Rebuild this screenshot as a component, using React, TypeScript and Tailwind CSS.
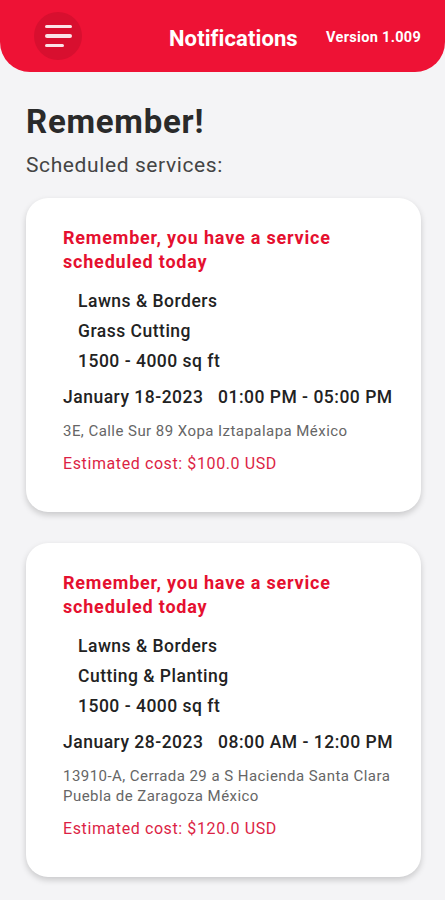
import React from "react";

type Service = {
  items: string[];
  date: string;
  time: string;
  address: string;
  cost: string;
};

const services: Service[] = [
  {
    items: ["Lawns & Borders", "Grass Cutting", "1500 - 4000 sq ft"],
    date: "January 18-2023",
    time: "01:00 PM - 05:00 PM",
    address: "3E, Calle Sur 89 Xopa Iztapalapa México",
    cost: "$100.0 USD",
  },
  {
    items: ["Lawns & Borders", "Cutting & Planting", "1500 - 4000 sq ft"],
    date: "January 28-2023",
    time: "08:00 AM - 12:00 PM",
    address: "13910-A, Cerrada 29 a S Hacienda Santa Clara Puebla de Zaragoza México",
    cost: "$120.0 USD",
  },
];

function MenuButton() {
  return (
    <button className="w-12 h-12 rounded-full bg-[#d80f2f] flex flex-col justify-center gap-[6px] pl-[11px]">
      <span className="block h-[3.5px] w-[27px] rounded-full bg-[#fbe3e7]" />
      <span className="block h-[3.5px] w-[27px] rounded-full bg-[#fbe3e7]" />
      <span className="block h-[3.5px] w-[19px] rounded-full bg-[#fbe3e7]" />
    </button>
  );
}

function ServiceCard({ s }: { s: Service }) {
  return (
    <div className="bg-white rounded-[22px] shadow-[0_3px_6px_rgba(0,0,0,0.18)] pl-[37px] pr-[26px] pt-[28px] pb-[38px]">
      <p className="text-[18px] leading-[24px] font-bold tracking-[0.8px] text-[#e5102f] pr-10">
        Remember, you have a service scheduled today
      </p>
      <div className="pl-[15px] mt-[12px]">
        {s.items.map((it) => (
          <p key={it} className="text-[17.5px] leading-[30px] font-medium tracking-[0.5px] text-[#222]">{it}</p>
        ))}
      </div>
      <p className="text-[17.5px] leading-[24px] font-medium tracking-[0.5px] text-[#222] mt-[9px] whitespace-pre">
        {s.date}   {s.time}
      </p>
      <p className="text-[15px] leading-[20px] tracking-[0.45px] text-[#666] mt-[12px]">{s.address}</p>
      <p className="text-[16px] leading-[20px] tracking-[0.6px] text-[#dc1f45] mt-[13px]">Estimated cost: {s.cost}</p>
    </div>
  );
}

export default function App() {
  return (
    <div className="min-h-[900px] bg-[#f4f4f6] font-['Roboto',sans-serif]">
      <header className="h-[72px] bg-[#ee1235] rounded-b-[30px] flex items-center pl-[34px] pr-[24px]">
        <MenuButton />
        <h1 className="ml-[87px] mt-[4px] text-[22px] font-bold tracking-[0.1px] text-white">Notifications</h1>
        <span className="ml-auto mt-[3px] text-[14.5px] font-bold tracking-[0.3px] text-white">Version 1.009</span>
      </header>
      <main className="pl-[26px] pr-[24px] pt-[30px] pb-6">
        <h2 className="text-[33px] leading-[40px] font-bold tracking-[0.75px] text-[#2a2a2a]">Remember!</h2>
        <p className="text-[21px] leading-[26px] tracking-[0.6px] text-[#444] mt-[10px]">Scheduled services:</p>
        <div className="mt-[20px] flex flex-col gap-[31px]">
          {services.map((s) => (
            <ServiceCard key={s.date} s={s} />
          ))}
        </div>
      </main>
    </div>
  );
}
